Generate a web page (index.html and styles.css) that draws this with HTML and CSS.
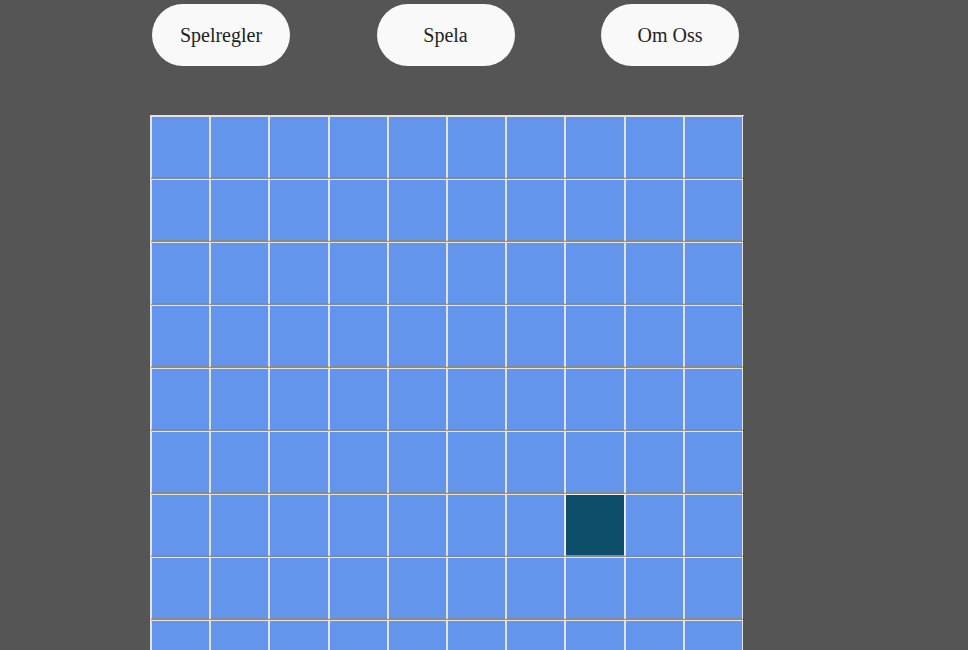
FILE: index.html
```html
<!DOCTYPE html>
<html lang="sv">
<head>
<meta charset="utf-8">
<title>Spel</title>
<link rel="stylesheet" href="styles.css">
</head>
<body>
<nav class="nav">
  <button class="nav-btn">Spelregler</button>
  <button class="nav-btn">Spela</button>
  <button class="nav-btn">Om Oss</button>
</nav>
<main class="board">
  <div class="cell"></div><div class="cell"></div><div class="cell"></div><div class="cell"></div><div class="cell"></div><div class="cell"></div><div class="cell"></div><div class="cell"></div><div class="cell"></div><div class="cell"></div>
  <div class="cell"></div><div class="cell"></div><div class="cell"></div><div class="cell"></div><div class="cell"></div><div class="cell"></div><div class="cell"></div><div class="cell"></div><div class="cell"></div><div class="cell"></div>
  <div class="cell"></div><div class="cell"></div><div class="cell"></div><div class="cell"></div><div class="cell"></div><div class="cell"></div><div class="cell"></div><div class="cell"></div><div class="cell"></div><div class="cell"></div>
  <div class="cell"></div><div class="cell"></div><div class="cell"></div><div class="cell"></div><div class="cell"></div><div class="cell"></div><div class="cell"></div><div class="cell"></div><div class="cell"></div><div class="cell"></div>
  <div class="cell"></div><div class="cell"></div><div class="cell"></div><div class="cell"></div><div class="cell"></div><div class="cell"></div><div class="cell"></div><div class="cell"></div><div class="cell"></div><div class="cell"></div>
  <div class="cell"></div><div class="cell"></div><div class="cell"></div><div class="cell"></div><div class="cell"></div><div class="cell"></div><div class="cell"></div><div class="cell"></div><div class="cell"></div><div class="cell"></div>
  <div class="cell"></div><div class="cell"></div><div class="cell"></div><div class="cell"></div><div class="cell"></div><div class="cell"></div><div class="cell"></div><div class="cell cell-active"></div><div class="cell"></div><div class="cell"></div>
  <div class="cell"></div><div class="cell"></div><div class="cell"></div><div class="cell"></div><div class="cell"></div><div class="cell"></div><div class="cell"></div><div class="cell"></div><div class="cell"></div><div class="cell"></div>
  <div class="cell"></div><div class="cell"></div><div class="cell"></div><div class="cell"></div><div class="cell"></div><div class="cell"></div><div class="cell"></div><div class="cell"></div><div class="cell"></div><div class="cell"></div>
  <div class="cell"></div><div class="cell"></div><div class="cell"></div><div class="cell"></div><div class="cell"></div><div class="cell"></div><div class="cell"></div><div class="cell"></div><div class="cell"></div><div class="cell"></div>
</main>
</body>
</html>
```
FILE: styles.css
```css
html, body {
  margin: 0;
  padding: 0;
  overflow: hidden;
}
body {
  background: #555555;
  font-family: "Liberation Serif", "Times New Roman", serif;
}
.nav {
  display: flex;
  gap: 86.5px;
  padding: 4px 0 0 152px;
}
.nav-btn {
  width: 138px;
  height: 62px;
  border: none;
  border-radius: 31px;
  background: #f9f9f9;
  color: #222;
  font-family: inherit;
  font-size: 20px;
  padding: 0;
}
.board {
  display: grid;
  grid-template-columns: repeat(10, 59.2px);
  grid-auto-rows: 63px;
  width: 593px;
  margin: 49px 0 0 150px;
  border-top: 1px solid #e2e2e2;
  border-left: 1px solid #e2e2e2;
}
.cell {
  background: #6495ed;
  border-top: 1px solid #e2e2e2;
  border-left: 1px solid #e2e2e2;
  border-right: 1px solid #e2e2e2;
  border-bottom: 2px solid #8a8a8a;
}
.cell-active {
  background: #0d4f6b;
  border-top-color: #f0f0f0;
  border-left-color: #f0f0f0;
  border-right-color: #f0f0f0;
}
```
